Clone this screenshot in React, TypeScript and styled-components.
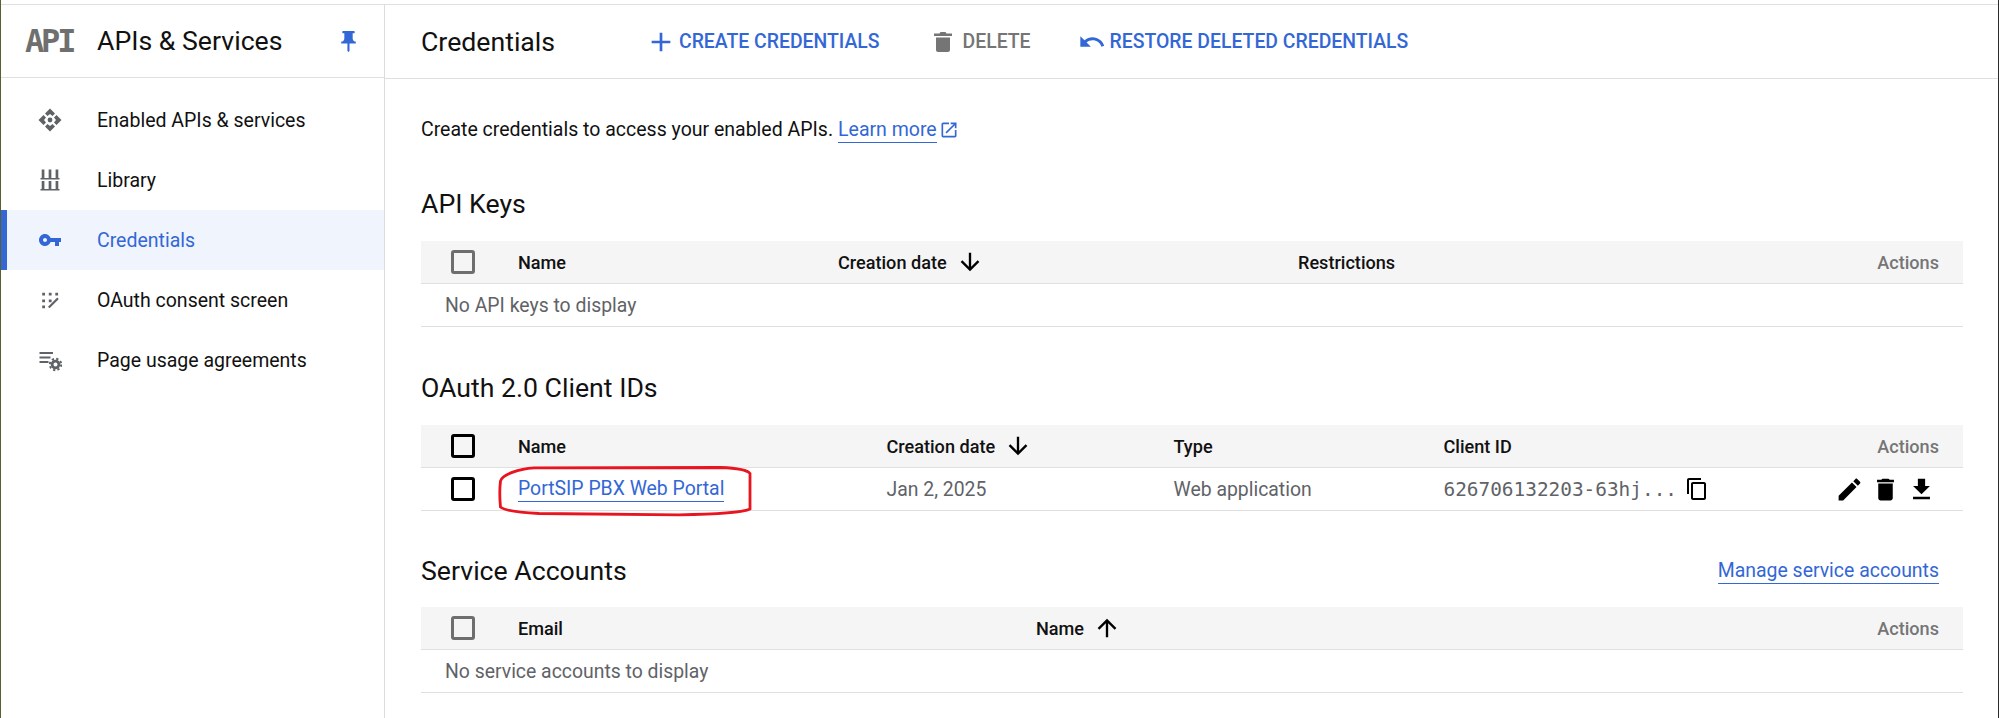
import React from "react";
import styled, { createGlobalStyle } from "styled-components";

const Global = createGlobalStyle`
  html, body { margin: 0; padding: 0; background: #fff; }
  body { font-family: Roboto, "Liberation Sans", sans-serif; color: #111; }
  * { box-sizing: border-box; }
`;

const BLUE = "#3367d6";

const Page = styled.div`
  width: 1999px; height: 718px; overflow: hidden; display: flex; flex-direction: column;
  padding-top: 4px; background: #fff; border-left: 1px solid #5b5f2e; border-right: 1px solid #2b2b2b;
`;
const Frame = styled.div`
  flex: 1; display: flex; min-height: 0; border-top: 1px solid #e0e0e0;
`;
const Sidebar = styled.aside`
  width: 384px; flex: none; border-right: 1px solid #dadce0; display: flex; flex-direction: column;
`;
const SideHead = styled.div`
  height: 73px; display: flex; align-items: center; padding: 0 23px 0 24px; border-bottom: 1px solid #e0e0e0;
`;
const Logo = styled.span`
  width: 72px; font-family: "DejaVu Sans Mono", monospace; font-weight: 700; font-size: 32px; letter-spacing: -3.2px;
  color: #6f6f6f; line-height: 1;
`;
const SideTitle = styled.span`
  flex: 1; font-size: 26.67px; color: #111;
`;
const PinIcon = styled.svg`
  width: 25px; height: 25px; color: ${BLUE}; flex: none;
`;
const NavList = styled.nav`
  padding-top: 12px; display: flex; flex-direction: column;
`;
const NavItem = styled.a<{ $active?: boolean }>`
  height: 60px; display: flex; align-items: center; font-size: 19.5px;
  padding-left: 30.5px; border-left: 6px solid ${(p) => (p.$active ? BLUE : "transparent")};
  background: ${(p) => (p.$active ? "#eff4fd" : "transparent")};
  color: ${(p) => (p.$active ? BLUE : "#111")};
  svg { width: 24px; height: 24px; margin-right: 35.5px; flex: none; color: ${(p) => (p.$active ? BLUE : "#5f6368")}; }
`;
const Main = styled.main`
  flex: 1; min-width: 0; display: flex; flex-direction: column;
`;
const Toolbar = styled.div`
  height: 74px; display: flex; align-items: center; padding: 0 35px 0 36px; border-bottom: 1px solid #e0e0e0; flex: none;
`;
const PageTitle = styled.h1`
  margin: 0; width: 223.5px; font-size: 26.67px; font-weight: 400; flex: none;
`;
const ToolButton = styled.button<{ $muted?: boolean; $gap: number }>`
  all: unset; display: flex; align-items: center; font-size: 19.4px; font-weight: 500;
  margin-right: ${(p) => p.$gap}px;
  color: ${(p) => (p.$muted ? "#757575" : BLUE)};
`;
const ToolIcon = styled.svg<{ $size: number; $gap: number }>`
  width: ${(p) => p.$size}px; height: ${(p) => p.$size}px; margin-right: ${(p) => p.$gap}px; flex: none;
`;
const TrashTool = styled.svg`
  width: 18px; height: 21px; margin: 0 11px 0 7px; flex: none;
`;
const Content = styled.div`
  flex: 1; padding: 37px 35px 0 36px; position: relative;
`;
const Intro = styled.p`
  margin: 0; font-size: 19.5px; height: 28px; line-height: 26px; display: flex; align-items: center;
`;
const TextLink = styled.a`
  color: ${BLUE}; border-bottom: 1px solid ${BLUE}; line-height: 24px;
`;
const LearnMore = styled(TextLink)`
  margin-left: 5px;
`;
const OpenIcon = styled.svg`
  width: 20px; height: 20px; margin-left: 2px; color: ${BLUE};
`;
const SectionTitle = styled.div<{ $below: number }>`
  height: 32px; display: flex; align-items: center; justify-content: space-between;
  font-size: 26.67px; margin-bottom: ${(p) => p.$below}px;
  ${TextLink} { font-size: 19.45px; margin-right: 24px; }
`;
const Section = styled.section<{ $top: number }>`
  margin-top: ${(p) => p.$top}px;
`;
const Row = styled.div<{ $cols: string; $head?: boolean }>`
  display: grid; grid-template-columns: ${(p) => p.$cols}; align-items: center;
  height: 43px; border-bottom: 1px solid #e0e0e0;
  background: ${(p) => (p.$head ? "#f5f5f5" : "transparent")};
  font-size: ${(p) => (p.$head ? "18.1px" : "19.4px")};
  font-weight: ${(p) => (p.$head ? 500 : 400)};
  color: ${(p) => (p.$head ? "#111" : "#5f6368")};
`;
const CheckCell = styled.div`
  display: flex; justify-content: flex-start; padding-left: 30px;
`;
const Check = styled.span<{ $on?: boolean }>`
  width: 24px; height: 24px; border: 3px solid ${(p) => (p.$on ? "#000" : "#6e6e6e")}; border-radius: 3px; display: block;
`;
const Cell = styled.div`
  display: flex; align-items: center; white-space: nowrap;
`;
const SortIcon = styled.svg`
  width: 28px; height: 28px; margin-left: 9px; color: #000; flex: none;
`;
const ActionsHead = styled.div`
  justify-self: end; padding-right: 24px; color: #757575;
`;
const Empty = styled.div`
  height: 43px; display: flex; align-items: center; padding-left: 24px; font-size: 19.4px; color: #5f6368;
  border-bottom: 1px solid #e0e0e0;
`;
const Mono = styled.span`
  font-family: "DejaVu Sans Mono", monospace; font-size: 19.4px; color: #5f6368; margin-right: 8px;
`;
const CopyIcon = styled.svg`
  width: 24px; height: 24px; color: #000; flex: none;
`;
const ActionIcon = styled.svg`
  width: 29px; height: 29px; color: #000; flex: none;
`;
const ActionIcons = styled.div`
  justify-self: end; display: flex; gap: 7px; padding-right: 27px;
`;
const Highlight = styled.svg`
  position: absolute; left: 78px; top: -1px; width: 254px; height: 50px; overflow: visible; pointer-events: none;
`;
const OAuthBody = styled.div`
  position: relative;
`;

const P = ({ d }: { d: string }) => <path fill="currentColor" d={d} />;

const TRASH = "M0 2.500h5.500L6.500 1h5l1 1.500H18V5H0zM2 6.500h14V19c0 1.100-.9 2-2 2H4c-1.100 0-2-.9-2-2z";

const ICON = {
  pin: "M16 9V4h1c.55 0 1-.45 1-1s-.45-1-1-1H7c-.55 0-1 .45-1 1s.45 1 1 1h1v5c0 1.66-1.34 3-3 3v2h5.97v7l1 1 1-1v-7H19v-2c-1.66 0-3-1.34-3-3z",
  add: "M19 13h-6v6h-2v-6H5v-2h6V5h2v6h6v2z",
  undo: "M12.5 8c-2.65 0-5.05.99-6.9 2.6L2 7v9h9l-3.62-3.62c1.39-1.16 3.16-1.88 5.12-1.88 3.54 0 6.55 2.31 7.6 5.5l2.37-.78C21.08 11.03 17.15 8 12.5 8z",
  open: "M19 19H5V5h7V3H5c-1.11 0-2 .9-2 2v14c0 1.1.89 2 2 2h14c1.1 0 2-.9 2-2v-7h-2v7zM14 3v2h3.59l-9.83 9.83 1.41 1.41L19 6.41V10h2V3h-7z",
  down: "M20 12l-1.41-1.41L13 16.17V4h-2v12.17l-5.58-5.59L4 12l8 8 8-8z",
  up: "M4 12l1.41 1.41L11 7.83V20h2V7.83l5.58 5.59L20 12l-8-8-8 8z",
  copy: "M16 1H4c-1.1 0-2 .9-2 2v14h2V3h12V1zm3 4H8c-1.1 0-2 .9-2 2v14c0 1.1.9 2 2 2h11c1.1 0 2-.9 2-2V7c0-1.1-.9-2-2-2zm0 16H8V7h11v14z",
  edit: "M3 17.25V21h3.75L17.81 9.94l-3.75-3.75L3 17.25zM20.71 7.04c.39-.39.39-1.02 0-1.41l-2.34-2.34c-.39-.39-1.02-.39-1.41 0l-1.83 1.83 3.75 3.75 1.83-1.83z",
  dl: "M19 9h-4V3H9v6H5l7 7 7-7zM5 18v2h14v-2H5z",
  del: "M6 19c0 1.1.9 2 2 2h8c1.1 0 2-.9 2-2V7H6v12zM19 4h-3.5l-1-1h-5l-1 1H5v2h14V4z",
  key: "M12.65 10C11.83 7.67 9.61 6 7 6c-3.31 0-6 2.69-6 6s2.69 6 6 6c2.61 0 4.83-1.67 5.65-4H17v4h4v-4h2v-4H12.65zM7 14c-1.1 0-2-.9-2-2s.9-2 2-2 2 .9 2 2-.9 2-2 2z",
};

const EnabledIcon = () => (
  <svg viewBox="0 0 24 24">
    <g fill="currentColor">
      <path d="M12 0.500l5 5-2.500 2.500-2.500-2-2.500 2L7 5.500z" />
      <path d="M12 23.500l5-5-2.500-2.500-2.500 2-2.500-2L7 18.500z" />
      <path d="M0.500 12l5-5 2.500 2.500-2 2.500 2 2.500L5.500 17z" />
      <path d="M23.500 12l-5-5-2.500 2.500 2 2.500-2 2.500 2.500 2.500z" />
      <circle cx="12" cy="12" r="2.400" />
    </g>
  </svg>
);
const LibraryIcon = () => (
  <svg viewBox="0 0 24 24">
    <path fill="currentColor" d="M2.500 10h19v1.600h-19zM2.500 21h19v1.600h-19zM3.700 1.500h2.700V10H3.700zM10.650 1.500h2.700V10h-2.700zM17.600 1.500h2.700V10h-2.700zM3.700 13h2.700V21H3.700zM10.650 13h2.700V21h-2.700zM17.600 13h2.700V21h-2.700z" />
  </svg>
);
const OAuthIcon = () => (
  <svg viewBox="0 0 24 24">
    <path fill="currentColor" d="M4.200 4.800h2.800v2.800H4.200zM10.800 4.800h2.800v2.800h-2.800zM17.300 4.800h2.800v2.800h-2.800zM4.200 11.400h2.800v2.800H4.200zM10.800 11.400h2.800v2.800h-2.800zM4.200 17.500h2.800v2.800H4.200z" />
    <path fill="none" stroke="currentColor" strokeWidth="2.200" d="M10.800 19.500L20 10.300" />
  </svg>
);
const UsageIcon = () => (
  <svg viewBox="0 0 24 24">
    <path fill="currentColor" d="M1.500 4h13.500v2H1.500zM1.500 8.500h11v2h-11zM1.500 13h9v2h-9z" />
    <circle cx="17.500" cy="16.500" r="3.400" fill="none" stroke="currentColor" strokeWidth="2.800" />
    <circle cx="17.500" cy="16.500" r="5.700" fill="none" stroke="currentColor" strokeWidth="2" strokeDasharray="2.240 2.240" />
  </svg>
);

const K1 = "97px 320px 460px 1fr 300px";
const K2 = "97px 368.5px 287px 270px 1fr 180px";
const K3 = "97px 518px 1fr 300px";

export default function App() {
  return (
    <Page>
      <Global />
      <Frame>
        <Sidebar>
          <SideHead>
            <Logo>API</Logo>
            <SideTitle>APIs &amp; Services</SideTitle>
            <PinIcon viewBox="0 0 24 24"><P d={ICON.pin} /></PinIcon>
          </SideHead>
          <NavList>
            <NavItem><EnabledIcon />Enabled APIs &amp; services</NavItem>
            <NavItem><LibraryIcon />Library</NavItem>
            <NavItem $active><svg viewBox="0 0 24 24"><P d={ICON.key} /></svg>Credentials</NavItem>
            <NavItem><OAuthIcon />OAuth consent screen</NavItem>
            <NavItem><UsageIcon />Page usage agreements</NavItem>
          </NavList>
        </Sidebar>
        <Main>
          <Toolbar>
            <PageTitle>Credentials</PageTitle>
            <ToolButton $gap={47}><ToolIcon $size={32} $gap={2.5} viewBox="0 0 24 24"><P d={ICON.add} /></ToolIcon>CREATE CREDENTIALS</ToolButton>
            <ToolButton $muted $gap={47}><TrashTool viewBox="0 0 18 21"><P d={TRASH} /></TrashTool>DELETE</ToolButton>
            <ToolButton $gap={0}><ToolIcon $size={28} $gap={4} viewBox="0 0 24 24"><P d={ICON.undo} /></ToolIcon>RESTORE DELETED CREDENTIALS</ToolButton>
          </Toolbar>
          <Content>
            <Intro>
              Create credentials to access your enabled APIs.
              <LearnMore>Learn more</LearnMore>
              <OpenIcon viewBox="0 0 24 24"><P d={ICON.open} /></OpenIcon>
            </Intro>
            <Section $top={44}>
              <SectionTitle $below={21}>API Keys</SectionTitle>
              <Row $head $cols={K1}>
                <CheckCell><Check /></CheckCell>
                <Cell>Name</Cell>
                <Cell>Creation date<SortIcon viewBox="0 0 24 24"><P d={ICON.down} /></SortIcon></Cell>
                <Cell>Restrictions</Cell>
                <ActionsHead>Actions</ActionsHead>
              </Row>
              <Empty>No API keys to display</Empty>
            </Section>
            <Section $top={45}>
              <SectionTitle $below={21}>OAuth 2.0 Client IDs</SectionTitle>
              <Row $head $cols={K2}>
                <CheckCell><Check $on /></CheckCell>
                <Cell>Name</Cell>
                <Cell>Creation date<SortIcon viewBox="0 0 24 24"><P d={ICON.down} /></SortIcon></Cell>
                <Cell>Type</Cell>
                <Cell>Client ID</Cell>
                <ActionsHead>Actions</ActionsHead>
              </Row>
              <OAuthBody>
                <Row $cols={K2}>
                  <CheckCell><Check $on /></CheckCell>
                  <Cell><TextLink>PortSIP PBX Web Portal</TextLink></Cell>
                  <Cell>Jan 2, 2025</Cell>
                  <Cell>Web application</Cell>
                  <Cell><Mono>626706132203-63hj...</Mono><CopyIcon viewBox="0 0 24 24"><P d={ICON.copy} /></CopyIcon></Cell>
                  <ActionIcons>
                    <ActionIcon viewBox="0 0 24 24"><P d={ICON.edit} /></ActionIcon>
                    <ActionIcon viewBox="0 0 24 24"><P d={ICON.del} /></ActionIcon>
                    <ActionIcon viewBox="0 0 24 24"><P d={ICON.dl} /></ActionIcon>
                  </ActionIcons>
                </Row>
                <Highlight viewBox="0 0 254 50">
                  <path fill="none" stroke="#e8141f" strokeWidth="2.800" d="M1.500 14C3 8 20 1.500 35 0.800L222 0.500C235 1 248 2.500 251 6.500L251 42C245 45 230 47 180 47.800L40 46.500C20 45.500 6 44 1.500 40C0.500 30 0.500 22 1.500 14z" />
                </Highlight>
              </OAuthBody>
            </Section>
            <Section $top={44}>
              <SectionTitle $below={20}>Service Accounts<TextLink>Manage service accounts</TextLink></SectionTitle>
              <Row $head $cols={K3}>
                <CheckCell><Check /></CheckCell>
                <Cell>Email</Cell>
                <Cell>Name<SortIcon viewBox="0 0 24 24"><P d={ICON.up} /></SortIcon></Cell>
                <ActionsHead>Actions</ActionsHead>
              </Row>
              <Empty>No service accounts to display</Empty>
            </Section>
          </Content>
        </Main>
      </Frame>
    </Page>
  );
}
